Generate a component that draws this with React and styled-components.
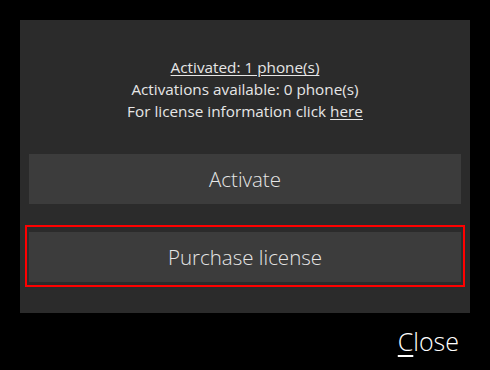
import styled, { createGlobalStyle } from "styled-components";

const Global = createGlobalStyle`
  html, body {
    margin: 0;
    background: #000;
  }
  body {
    font-family: "Open Sans", "Noto Sans", sans-serif;
    color: #e6e6e6;
  }
`;

const Page = styled.div`
  width: 490px;
  height: 370px;
  box-sizing: border-box;
  padding: 20px 20px 0;
  display: flex;
  flex-direction: column;
`;

const Panel = styled.div`
  height: 293px;
  box-sizing: border-box;
  background: #2b2b2b;
  padding: 36px 9px 0;
  display: flex;
  flex-direction: column;
`;

const Info = styled.div`
  text-align: center;
  font-size: 15.3px;
  line-height: 22px;
  margin-bottom: 32px;
`;

const Line = styled.div`
  text-decoration: ${(p) => (p.$underline ? "underline" : "none")};
  text-underline-offset: 2px;
`;

const Link = styled.a`
  color: inherit;
  text-decoration: underline;
  text-underline-offset: 2px;
`;

const Button = styled.button`
  display: block;
  width: 100%;
  height: 50px;
  border: none;
  background: #3c3c3c;
  color: #e6e6e6;
  font-family: "Open Sans", "Noto Sans", sans-serif;
  font-weight: 300;
  font-size: 20.5px;
  padding: 0;
  cursor: pointer;
`;

const Focus = styled.div`
  margin: 21px -4px 0;
  border: 2px solid #ff0000;
  padding: 5px 2px 3px;
`;

const Footer = styled.div`
  display: flex;
  justify-content: flex-end;
  padding: 11px 11px 0 0;
`;

const Close = styled.button`
  background: none;
  border: none;
  padding: 0;
  color: #fff;
  font-family: "Open Sans", "Noto Sans", sans-serif;
  font-weight: 300;
  font-size: 25px;
  cursor: pointer;
`;

const Key = styled.span`
  text-decoration: underline;
  text-underline-offset: 4px;
`;

export default function App() {
  return (
    <Page>
      <Global />
      <Panel>
        <Info>
          <Line $underline>Activated: 1 phone(s)</Line>
          <Line>Activations available: 0 phone(s)</Line>
          <Line>
            For license information click <Link href="#">here</Link>
          </Line>
        </Info>
        <Button>Activate</Button>
        <Focus>
          <Button>Purchase license</Button>
        </Focus>
      </Panel>
      <Footer>
        <Close>
          <Key>C</Key>lose
        </Close>
      </Footer>
    </Page>
  );
}
